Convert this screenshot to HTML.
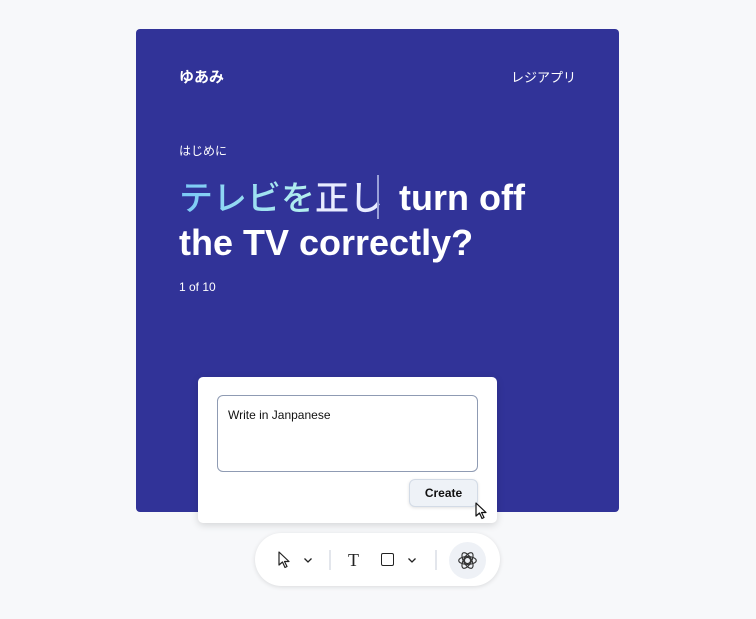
<!DOCTYPE html>
<html><head><meta charset="utf-8"><style>
*{margin:0;padding:0;box-sizing:border-box}
body{width:756px;height:619px;background:#f7f8fa;font-family:"Liberation Sans","Noto Sans CJK JP",sans-serif;position:relative;overflow:hidden}
.card{position:absolute;left:136px;top:29px;width:483px;height:483px;background:#313398;border-radius:4px;color:#fff}
.logo{position:absolute;left:43px;top:37px;font-size:15px;font-weight:bold}
.nav{position:absolute;right:43px;top:38px;font-size:13px}
.intro{position:absolute;left:43px;top:113px;font-size:12px}
.title{position:absolute;left:43px;top:146px;font-size:36px;font-weight:bold;line-height:44px;width:380px}
.jp{font-weight:500;font-size:34px;background:linear-gradient(90deg,#79c8f6,#b8f2ee);-webkit-background-clip:text;color:transparent}
.jp2{font-weight:500;font-size:34px;color:#e8ecff}
.caret{display:inline-block;width:2px;height:44px;background:#9aa0d8;vertical-align:-9px;margin:0 20px 0 -6px}
.count{position:absolute;left:43px;top:251px;font-size:12px}
.pop{position:absolute;left:198px;top:377px;width:299px;height:146px;background:#fff;border-radius:5px;box-shadow:0 2px 8px rgba(0,0,0,.15)}
.ta{position:absolute;left:19px;top:18px;width:261px;height:77px;border:1px solid #8f9bb3;border-radius:6px;font-size:12px;padding:12px 10px;color:#111}
.btn{position:absolute;left:211px;top:102px;width:69px;height:28px;background:#eef2f7;border:1px solid #d3dbe6;border-radius:6px;font-size:12px;font-weight:bold;text-align:center;line-height:26px;color:#111;box-shadow:0 1px 3px rgba(0,0,0,.12)}
.tb{position:absolute;left:255px;top:533px;width:245px;height:53px;background:#fff;border-radius:27px;box-shadow:0 1px 5px rgba(0,0,0,.12)}
.sep{position:absolute;top:17px;width:2px;height:20px;background:#e3e6ec}
</style></head><body>
<div class="card">
<div class="logo">ゆあみ</div>
<div class="nav">レジアプリ</div>
<div class="intro">はじめに</div>
<div class="title"><span class="jp">テレビを</span><span class="jp2">正し</span><span class="caret"></span>turn off the TV correctly?</div>
<div class="count">1 of 10</div>
</div>
<div class="pop">
<div class="ta">Write in Janpanese</div>
<div class="btn">Create</div>
<svg style="position:absolute;left:277px;top:125px" width="14" height="18" viewBox="0 0 14 18"><path d="M1 1 L1 14 L4.5 11 L7 16.5 L9 15.5 L6.5 10.5 L11 10.5 Z" fill="#fff" stroke="#111" stroke-width="1.2" stroke-linejoin="round"/></svg>
</div>
<div class="tb">
<svg style="position:absolute;left:23px;top:18px" width="14" height="18" viewBox="0 0 14 18"><path d="M1 1 L1 14 L4.5 11 L7 16.5 L9 15.5 L6.5 10.5 L11 10.5 Z" fill="#fff" stroke="#222" stroke-width="1.2" stroke-linejoin="round"/></svg>
<svg style="position:absolute;left:48px;top:24px" width="10" height="7" viewBox="0 0 10 7"><path d="M1.5 1.5 L5 5 L8.5 1.5" fill="none" stroke="#222" stroke-width="1.3"/></svg>
<div class="sep" style="left:74px"></div>
<div style="position:absolute;left:93px;top:17px;font-family:'Liberation Serif',serif;font-size:18px;color:#222">T</div>
<div style="position:absolute;left:126px;top:20px;width:13px;height:13px;border:1.5px solid #222;border-radius:2px"></div>
<svg style="position:absolute;left:152px;top:24px" width="10" height="7" viewBox="0 0 10 7"><path d="M1.5 1.5 L5 5 L8.5 1.5" fill="none" stroke="#222" stroke-width="1.3"/></svg>
<div class="sep" style="left:180px"></div>
<div style="position:absolute;left:194px;top:9px;width:37px;height:37px;border-radius:50%;background:#eef1f6"></div>
<svg style="position:absolute;left:202px;top:17px" width="21" height="21" viewBox="0 0 24 24" fill="none" stroke="#333" stroke-width="1.3"><circle cx="12" cy="12" r="3.5"/><ellipse cx="12" cy="12" rx="10" ry="4.5"/><ellipse cx="12" cy="12" rx="10" ry="4.5" transform="rotate(60 12 12)"/><ellipse cx="12" cy="12" rx="10" ry="4.5" transform="rotate(120 12 12)"/></svg>
</div>
</body></html>
